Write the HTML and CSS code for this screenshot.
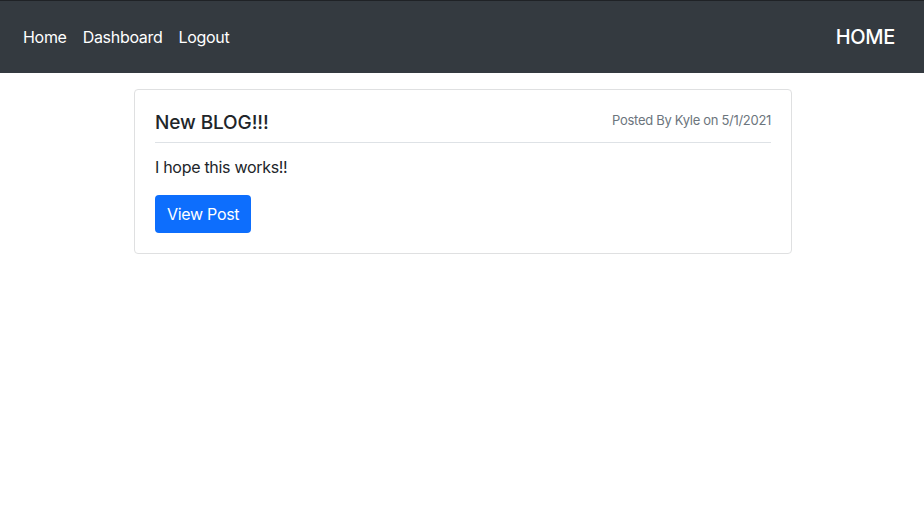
FILE: index.html
```html
<!DOCTYPE html>
<html>
<head>
<meta charset="utf-8">
<link rel="stylesheet" href="styles.css">
</head>
<body>
<nav class="navbar">
  <div class="nav-links">
    <a href="#">Home</a>
    <a href="#">Dashboard</a>
    <a href="#">Logout</a>
  </div>
  <div class="brand">HOME</div>
</nav>
<main class="main">
  <div class="card">
    <div class="card-head">
      <h2 class="title">New BLOG!!!</h2>
      <span class="meta">Posted By Kyle on 5/1/2021</span>
    </div>
    <p class="text">I hope this works!!</p>
    <a class="btn" href="#">View Post</a>
  </div>
</main>
</body>
</html>
```
FILE: styles.css
```css
* { box-sizing: border-box; }
body {
  margin: 0;
  font-family: Inter, "Noto Sans", "Liberation Sans", sans-serif;
  color: #212529;
  background: #fff;
  letter-spacing: -0.3px;
}
.navbar {
  height: 73px;
  background: #343a40;
  border-top: 1px solid #1f2226;
  display: flex;
  align-items: center;
  justify-content: space-between;
  padding: 0 29px 0 23px;
}
.nav-links { display: flex; gap: 16px; }
.nav-links a {
  color: #fff;
  text-decoration: none;
  font-size: 16px;
}
.brand {
  color: #fff;
  font-size: 20px;
  font-weight: 500;
}
.main { padding: 16px 0 0 2px; }
.card {
  width: 658px;
  margin: 0 auto;
  border: 1px solid #dfe0e1;
  border-radius: 4px;
  padding: 21px 20px 20px 20px;
}
.card-head {
  display: flex;
  justify-content: space-between;
  align-items: flex-start;
  padding-bottom: 7px;
  border-bottom: 1px solid #dee2e6;
}
.title {
  margin: 0;
  font-size: 19px;
  font-weight: 500;
  line-height: 24px;
  letter-spacing: -0.1px;
}
.meta {
  font-size: 13px;
  line-height: 16px;
  margin-top: 1px;
  color: #6c757d;
}
.text {
  margin: 12px 0 16px;
  font-size: 16px;
  line-height: 24px;
}
.btn {
  display: inline-block;
  background: #0d6efd;
  color: #fff;
  text-decoration: none;
  font-size: 16px;
  line-height: 24px;
  padding: 7px 12px;
  border-radius: 4px;
}
```
